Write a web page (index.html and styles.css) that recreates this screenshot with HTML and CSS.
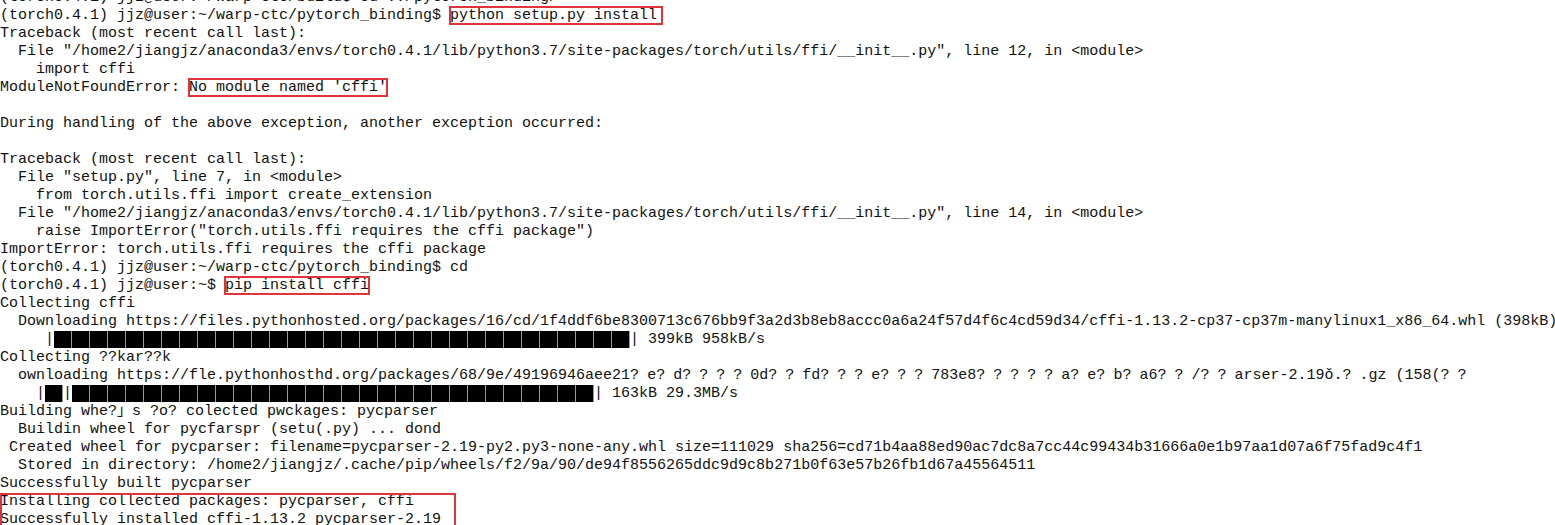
FILE: index.html
```html
<!DOCTYPE html>
<html lang="en">

<head>
    <meta charset="UTF-8">
    <meta name="viewport" content="width=device-width, initial-scale=1.0">
    <title>pip install cffi</title>
    <link rel="stylesheet" href="styles.css">
</head>

<body>
    <div class="terminal">
<div class="term">(torch0.4.1) jjz@user:~/warp-ctc/build$ cd ../pytorch_binding/
(torch0.4.1) jjz@user:~/warp-ctc/pytorch_binding$ <span class="mark mark-wide">python setup.py install</span>
Traceback (most recent call last):
  File "/home2/jiangjz/anaconda3/envs/torch0.4.1/lib/python3.7/site-packages/torch/utils/ffi/__init__.py", line 12, in &lt;module&gt;
    import cffi
ModuleNotFoundError: <span class="mark">No module named 'cffi'</span>

During handling of the above exception, another exception occurred:

Traceback (most recent call last):
  File "setup.py", line 7, in &lt;module&gt;
    from torch.utils.ffi import create_extension
  File "/home2/jiangjz/anaconda3/envs/torch0.4.1/lib/python3.7/site-packages/torch/utils/ffi/__init__.py", line 14, in &lt;module&gt;
    raise ImportError("torch.utils.ffi requires the cffi package")
ImportError: torch.utils.ffi requires the cffi package
(torch0.4.1) jjz@user:~/warp-ctc/pytorch_binding$ cd
(torch0.4.1) jjz@user:~$ <span class="mark">pip install cffi</span>
Collecting cffi
  Downloading https://files.pythonhosted.org/packages/16/cd/1f4ddf6be8300713c676bb9f3a2d3b8eb8accc0a6a24f57d4f6c4cd59d34/cffi-1.13.2-cp37-cp37m-manylinux1_x86_64.whl (398kB)
     |<span class="bar bar-32"></span>| 399kB 958kB/s
Collecting ??kar??k
  ownloading https://fle.pythonhosthd.org/packages/68/9e/49196946aee21<span class="fw">?</span>e<span class="fw">?</span>d<span class="fw">????</span>0d<span class="fw">??</span>fd<span class="fw">???</span>e<span class="fw">???</span>783e8<span class="fw">?????</span>a<span class="fw">?</span>e<span class="fw">?</span>b<span class="fw">?</span>a6<span class="fw">??</span>/<span class="fw">??</span>arser-2.19ǒ.<span class="fw">?</span>.gz (158(<span class="fw">??</span>
    |<span class="bar bar-1"></span>|<span class="bar bar-29"></span>| 163kB 29.3MB/s
Building whe?」s ?o? colected pwckages: pycparser
  Buildin wheel for pycfarspr (setu(.py) ... dond
 Created wheel for pycparser: filename=pycparser-2.19-py2.py3-none-any.whl size=111029 sha256=cd71b4aa88ed90ac7dc8a7cc44c99434b31666a0e1b97aa1d07a6f75fad9c4f1
  Stored in directory: /home2/jiangjz/.cache/pip/wheels/f2/9a/90/de94f8556265ddc9d9c8b271b0f63e57b26fb1d67a45564511
Successfully built pycparser</div>
<div class="term mark-block">Installing collected packages: pycparser, cffi
Successfully installed cffi-1.13.2 pycparser-2.19</div>
    </div>
</body>

</html>
```

FILE: styles.css
```css
body {
    margin: 0;
    background-color: white;
    color: #111;
    overflow: hidden;
}

.terminal {
    margin-top: -11px;
}

.term {
    font-family: 'Liberation Mono', 'Noto Sans CJK SC', monospace;
    font-size: 15px;
    line-height: 18px;
    white-space: pre;
}

/* garbled chars drawn wider, like the console font does */
.fw {
    letter-spacing: 8px;
}

.mark {
    outline: 2px solid #e0343a;
    outline-offset: -1px;
}

.mark-wide {
    padding-right: 5px;
}

.mark-block {
    width: 456px;
    outline: 2px solid #e0343a;
    outline-offset: -2px;
}

.bar {
    display: inline-block;
    height: 17px;
    vertical-align: top;
    background: repeating-linear-gradient(to right, #000 0, #000 17px, #9a9a9a 17px, #9a9a9a 18px);
}

.bar-1 {
    width: 18px;
}

.bar-29 {
    width: 522px;
}

.bar-32 {
    width: 576px;
}
```
